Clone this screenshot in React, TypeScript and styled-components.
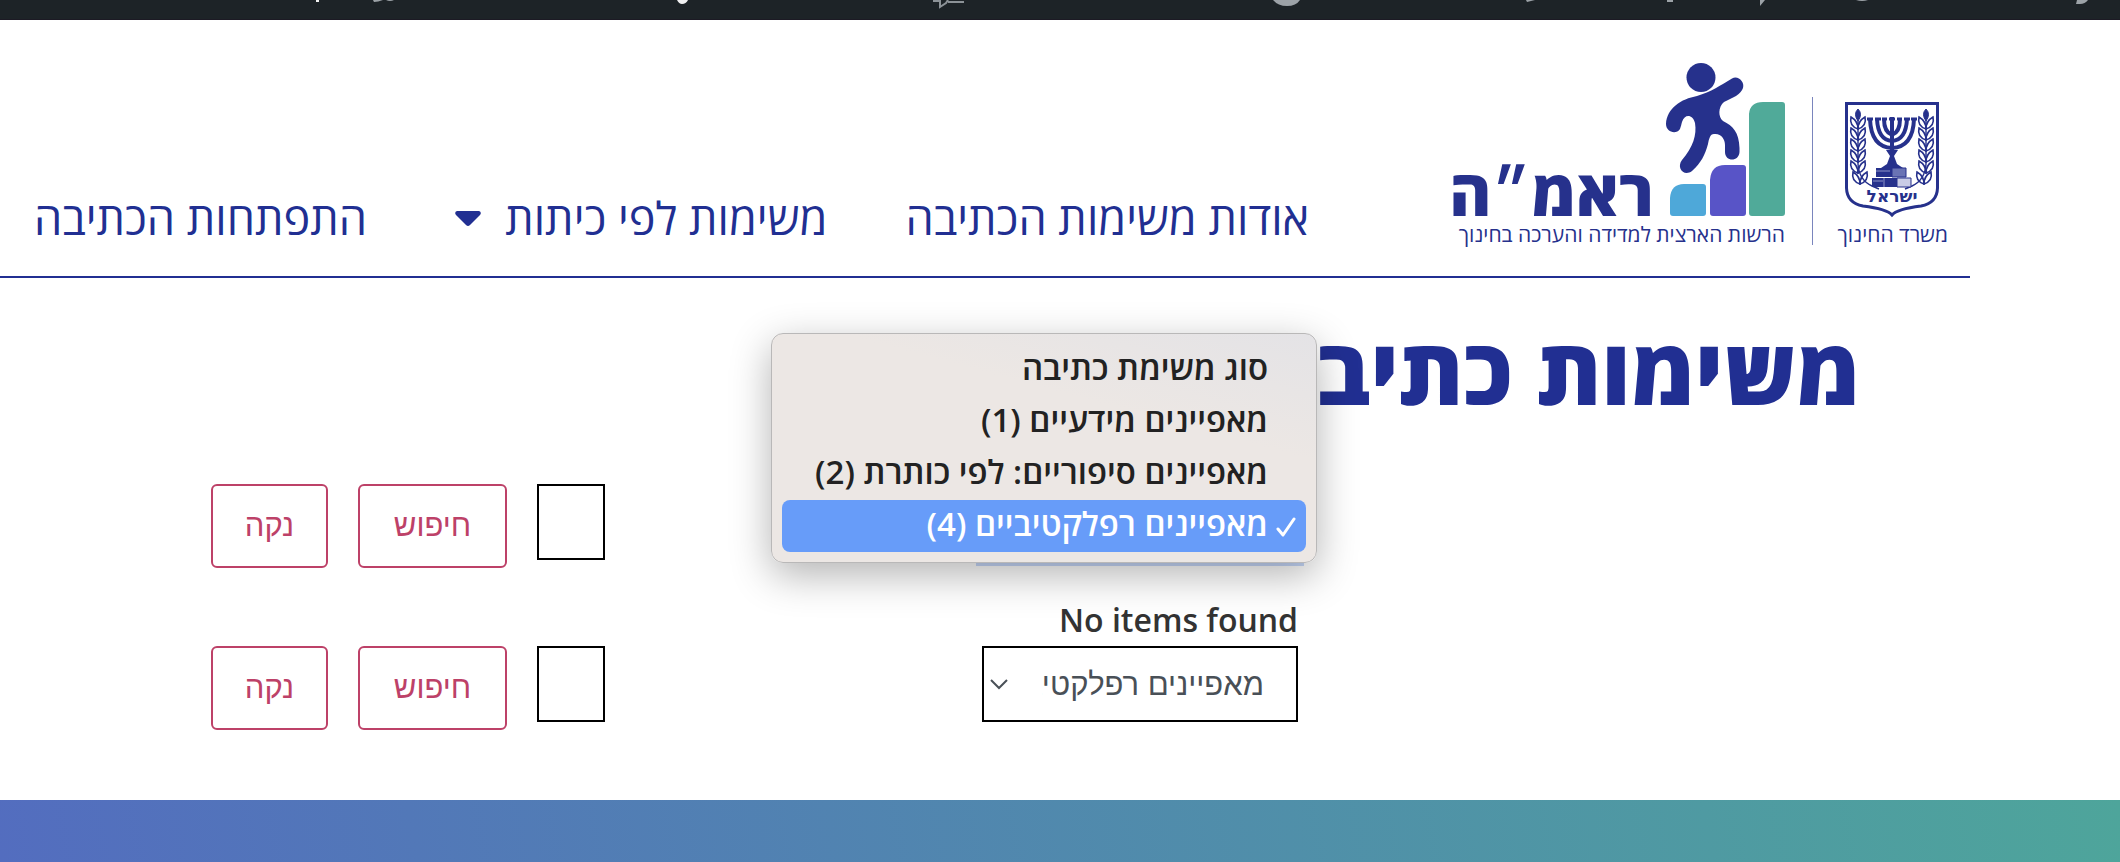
import React from "react";
import styled, { createGlobalStyle } from "styled-components";

const navy = "#212f92";
const logoNavy = "#26318c";
const rose = "#bd4168";

const GlobalStyle = createGlobalStyle`
  *, *::before, *::after { box-sizing: border-box; }
  html, body { margin: 0; background: #fff; overflow-x: hidden; }
  body { font-family: "Open Sans", "Noto Sans", sans-serif; color: #333; }
`;

const Page = styled.div`
  display: flex;
  flex-direction: column;
  min-height: 100vh;
`;

const AdminBar = styled.div`
  height: 20px;
  background: #1d2327;
  border-bottom: 1px solid #1c1a24;
  overflow: hidden;
`;

const AdminMarks = styled.svg`
  display: block;
  width: 2120px;
  height: 19px;
`;

const Header = styled.header`
  display: flex;
  align-items: flex-start;
  height: 258px;
  margin-inline-start: 150px;
  padding: 40px 20px 0 0;
  border-bottom: 2px solid ${navy};
`;

const LogoLink = styled.a`
  flex: none;
  display: block;
  width: 500px;
  height: 190px;
`;

const Nav = styled.nav`
  flex: none;
  display: flex;
  align-items: center;
  gap: 78px;
  margin: 130px 141px 0 0;
`;

const NavLink = styled.a`
  display: flex;
  align-items: center;
  gap: 24px;
  color: ${navy};
  font-size: 45px;
  line-height: 56px;
  white-space: nowrap;
  text-decoration: none;
`;

const CaretIcon = styled.svg`
  width: 26px;
  height: 15px;
  margin-inline-end: 10px;
`;

const Main = styled.main`
  flex: 1;
  padding-bottom: 70px;
`;

const Title = styled.h1`
  height: 206px;
  margin: 0;
  padding: 32px 260px 0 0;
  color: ${navy};
  font-size: 92px;
  font-weight: 800;
  line-height: 120px;
  white-space: nowrap;
`;

const FilterForm = styled.form`
  display: flex;
  justify-content: space-between;
  align-items: flex-start;
  padding-inline: 822px 211px;
`;

const Notice = styled.p`
  margin: 0;
  padding: 30px 822px 0 0;
  height: 78px;
  font-size: 32px;
  font-weight: 600;
  line-height: 44px;
`;

const Field = styled.div`
  position: relative;
  width: 316px;
`;

const Select = styled.select<{ $focused?: boolean }>`
  appearance: none;
  display: block;
  width: 100%;
  height: 76px;
  margin: 0;
  padding: 0 32px 0 58px;
  border: 2px solid #000;
  border-radius: 0;
  outline: none;
  background: #fff;
  box-shadow: ${(p) => (p.$focused ? "0 0 0 6px #c8d9fa" : "none")};
  color: #495057;
  font-family: "Liberation Sans", sans-serif;
  font-size: 31px;
`;

const Chevron = styled.svg`
  position: absolute;
  left: 7px;
  top: 32px;
  width: 20px;
  height: 13px;
  pointer-events: none;
`;

const Actions = styled.div`
  display: flex;
  align-items: flex-start;
  gap: 30px;
`;

const TermInput = styled.input`
  width: 68px;
  height: 76px;
  padding: 0 16px;
  border: 2px solid #000;
  border-radius: 0;
  background: #fff;
  font-size: 31px;
`;

const Button = styled.button<{ $wide?: boolean }>`
  width: ${(p) => (p.$wide ? 149 : 117)}px;
  height: 84px;
  padding: 0;
  border: 2px solid ${rose};
  border-radius: 6px;
  background: #fff;
  color: ${rose};
  font-family: "Liberation Sans", sans-serif;
  font-size: 31px;
  cursor: pointer;
`;

const Menu = styled.ul`
  position: absolute;
  z-index: 2;
  top: -151px;
  right: -19px;
  width: 546px;
  margin: 0;
  padding: 10px;
  list-style: none;
  border: 1px solid #b9b8b8;
  border-radius: 12px;
  background: linear-gradient(195deg, #e4e3e6 0%, #ece7e4 34%);
  box-shadow: 0 12px 40px rgba(0, 0, 0, 0.3);
`;

const Option = styled.li<{ $selected?: boolean }>`
  position: relative;
  height: 52px;
  padding-inline-start: 38px;
  border-radius: 8px;
  background: ${(p) => (p.$selected ? "#679cf9" : "transparent")};
  color: ${(p) => (p.$selected ? "#fff" : "#222")};
  font-size: 33px;
  font-weight: 600;
  line-height: 48px;
  white-space: nowrap;
`;

const Check = styled.svg`
  position: absolute;
  right: 10px;
  top: 17px;
  width: 20px;
  height: 20px;
`;

const Footer = styled.footer`
  height: 62px;
  background: linear-gradient(80deg, #536dbf 0%, #4ea59b 100%);
`;

const leafRows = [0, 1, 2, 3, 4, 5];

function Branch() {
  return (
    <g fill="none" stroke={logoNavy} strokeWidth="2">
      <path d="M13 14V58Q14 74 27 80L34 83" strokeWidth="1.4" />
      <path d="M13 3Q8 8 13 15Q18 8 13 3Z" fill={logoNavy} strokeWidth="1" />
      {leafRows.map((i) => (
        <g key={i} transform={`translate(${i > 4 ? 2 : 0} ${i * 11})`}>
          <path d="M13 23Q4 20 6 11Q13 15 13 23Z" strokeWidth="1.6" />
          <path d="M13 23Q22 20 20 11Q13 15 13 23Z" strokeWidth="1.6" />
        </g>
      ))}
    </g>
  );
}

function Emblem() {
  return (
    <g transform="translate(395 42)">
      <path
        d="M1.5 1.5H92.500V86Q92 101 76 104Q52 107 47 113Q42 107 18 104Q2 101 1.500 86Z"
        fill="none"
        stroke={logoNavy}
        strokeWidth="3"
      />
      <g transform="translate(0 4)">
        <Branch />
      </g>
      <g transform="translate(94 4) scale(-1 1)">
        <Branch />
      </g>
      <g fill="none" stroke={logoNavy} strokeWidth="4">
        <path d="M25 17Q26 45 47 46Q68 45 69 17" />
        <path d="M32 17Q33 38 47 39Q61 38 62 17" />
        <path d="M39 17Q39 30 47 33Q55 30 55 17" />
        <path d="M47 15V56" strokeWidth="4" />
        <path d="M22 17H28M30 17H36M37 17H42M44 17H50M52 17H57M59 17H65M66 17H72" strokeWidth="3" />
      </g>
      <path d="M41 48H53L49 54L52 62L58 66H36L42 62L45 54Z" fill={logoNavy} />
      <path d="M31 66H47V75H31ZM27 76H66V85H27Z" fill={logoNavy} />
      <path d="M47 66H61V75H47Z" fill="#6a73b4" stroke={logoNavy} />
      <path d="M52 76H66V85H52Z" fill="#c9cce6" stroke={logoNavy} />
      <path d="M39 76V85M31 69H45M28 79H38" stroke="#8d94c8" />
      <text x="47" y="100" textAnchor="middle" fontSize="17" fontWeight="700" fill={logoNavy} fontFamily="DejaVu Sans, sans-serif">
        ישראל
      </text>
    </g>
  );
}

function Logo() {
  return (
    <svg width="500" height="190" viewBox="0 0 500 190" role="img" aria-label="ראמ״ה" direction="rtl" overflow="visible">
      <path d="M299 155V54Q300 42 313 42H332Q335 42 335 45V153Q335 156 332 156H302Q299 156 299 153Z" fill="#50aa99" />
      <path d="M260 153V120Q261 105 275 105H293Q296 105 296 108V153Q296 156 293 156H263Q260 156 260 153Z" fill="#5854c7" />
      <path d="M220 153V138Q221 124 234 124H253Q256 124 256 127V153Q256 156 253 156H223Q220 156 220 153Z" fill="#4ea8d9" />
      <circle cx="251" cy="17.500" r="14.500" fill={logoNavy} />
      <path
        d="M282 18.500C288 15 295 22 293 28C292 31 290 33 286 36L274 42C268 47 268 57 273 61C283 66 289 72 289.500 88V92C289 102 275 102 275 92V85C275 79 271 73 264 74C260 74 259 79 258 84C255 95 251 103 242 111C234 117 226 108 232 100C243 87 247 75 245 63C243 55 235 53 232 62C231 66 231 66 230 69C226 75 216 72 216 64C217 48 231 39 247 36C261 32 271 25 282 18.500Z"
        fill={logoNavy}
      />
      <text x="204" y="156" fontSize="64" fontWeight="800" fill={logoNavy} fontFamily="Open Sans, sans-serif">
        ראמ״ה
      </text>
      <text x="335" y="182" fontSize="21" fill={logoNavy} fontFamily="Open Sans, sans-serif">
        הרשות הארצית למדידה והערכה בחינוך
      </text>
      <path d="M362.500 37V185" stroke="#7a85bd" strokeWidth="1" />
      <Emblem />
      <text x="498" y="182" fontSize="21" fill={logoNavy} fontFamily="Open Sans, sans-serif">
        משרד החינוך
      </text>
    </svg>
  );
}

function Caret() {
  return (
    <CaretIcon viewBox="0 0 26 15" aria-hidden="true">
      <path d="M2 0H24Q27 1 25 4L15 14Q13 16 11 14L1 4Q-1 1 2 0Z" fill={navy} />
    </CaretIcon>
  );
}

const options = [
  "סוג משימת כתיבה",
  "מאפיינים מידעיים (1)",
  "מאפיינים סיפוריים: לפי כותרת (2)",
  "מאפיינים רפלקטיביים (4)",
];
const selected = 3;

function Filters({ name, open }: { name: string; open?: boolean }) {
  return (
    <FilterForm onSubmit={(e) => e.preventDefault()}>
      <Field>
        <Select aria-label="סוג משימת כתיבה" name={name} defaultValue={options[selected]} $focused={open}>
          {options.map((o) => (
            <option key={o}>{o}</option>
          ))}
        </Select>
        <Chevron viewBox="0 0 20 13" aria-hidden="true">
          <path d="M2 2L10 10L18 2" fill="none" stroke="#495057" strokeWidth="2" />
        </Chevron>
        {open && (
          <Menu role="listbox" aria-label="סוג משימת כתיבה">
            {options.map((o, i) => (
              <Option key={o} role="option" aria-selected={i === selected} $selected={i === selected}>
                {i === selected && (
                  <Check viewBox="0 0 20 20" aria-hidden="true">
                    <path d="M2 12L7 18L18 2" fill="none" stroke="#fff" strokeWidth="3" strokeLinecap="round" strokeLinejoin="round" />
                  </Check>
                )}
                {o}
              </Option>
            ))}
          </Menu>
        )}
      </Field>
      <Actions>
        <TermInput type="text" aria-label="חיפוש" />
        <Button type="submit" $wide>
          חיפוש
        </Button>
        <Button type="reset">נקה</Button>
      </Actions>
    </FilterForm>
  );
}

export default function App() {
  return (
    <Page dir="rtl" lang="he">
      <GlobalStyle />
      <AdminBar>
        <AdminMarks viewBox="0 0 2120 19" aria-hidden="true">
          <path d="M316 0H319V2H316Z" fill="#f0f0f1" />
          <path d="M677 0H688Q686 4 682 4Q679 4 677 0Z" fill="#f0f0f1" />
          <g fill="#9ca2a7">
            <path d="M373 0H383Q378 2 374 2ZM386 0H394Q390 2 386 0Z" />
            <path d="M1273 0H1300Q1296 6 1287 6Q1278 6 1273 0Z" />
            <path d="M1526 0H1535L1527 2ZM1667 0H1673V2H1667ZM1760 0H1765L1760 6ZM1856 0H1868Q1862 2 1856 0Z" />
            <path d="M2077 0H2088Q2085 4 2080 4H2076Z" />
          </g>
          <path d="M933 1H940V7L946 3L948 0M948 2H964" fill="none" stroke="#8c9297" strokeWidth="2" />
        </AdminMarks>
      </AdminBar>
      <Header>
        <LogoLink href="#home">
          <Logo />
        </LogoLink>
        <Nav>
          <NavLink href="#about">אודות משימות הכתיבה</NavLink>
          <NavLink href="#grades">
            משימות לפי כיתות
            <Caret />
          </NavLink>
          <NavLink href="#development">התפתחות הכתיבה</NavLink>
        </Nav>
      </Header>
      <Main>
        <Title>משימות כתיבה</Title>
        <Filters name="type-top" open />
        <Notice>No items found</Notice>
        <Filters name="type-bottom" />
      </Main>
      <Footer />
    </Page>
  );
}
